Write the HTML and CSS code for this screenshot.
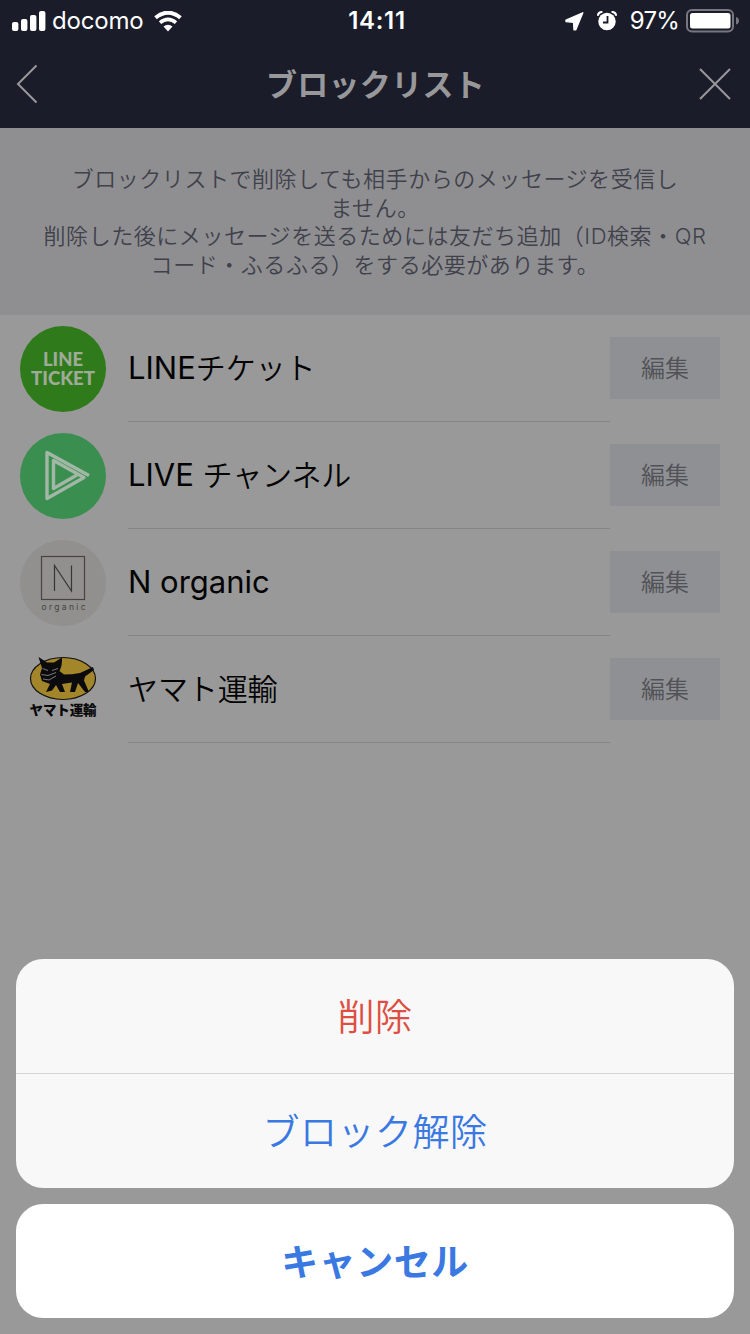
FILE: index.html
```html
<!DOCTYPE html>
<html lang="ja">
<head>
<meta charset="utf-8">
<title>ブロックリスト</title>
<link rel="stylesheet" href="styles.css">
</head>
<body>
<div class="screen">
  <header class="header">
    <div class="status">
      <div class="status-left">
        <svg class="signal" width="34" height="21" viewBox="0 0 34 21" fill="#fff"><rect x="0" y="11" width="6.400" height="9" rx="2"/><rect x="9" y="8" width="6.400" height="12" rx="2"/><rect x="18" y="4" width="6.400" height="16" rx="2"/><rect x="27" y="0" width="6.400" height="20" rx="2"/></svg>
        <span class="carrier">docomo</span>
        <svg class="wifi" width="28" height="21" viewBox="0 0 28 21" fill="none" stroke="#fff"><path d="M1.500 6.700Q14 -3.300 26.500 6.700" stroke-width="4"/><path d="M6 11.600Q14 5 22 11.600" stroke-width="3.600"/><path d="M9.500 15.500Q14 12 18.500 15.500L14 20.500Z" fill="#fff" stroke="none"/></svg>
      </div>
      <span class="clock">14:11</span>
      <div class="status-right">
        <svg class="loc" width="19" height="19" viewBox="0 0 19 19"><path d="M17.800.8 10.800 17.800 9 17.800 8.600 10.200 1 9.600 1 8.200Z" fill="#fff" stroke="#fff" stroke-width="1.400" stroke-linejoin="round"/></svg>
        <svg class="alarm" width="20" height="20" viewBox="0 0 20 20"><circle cx="10" cy="10.500" r="8.700" fill="#fff"/><path d="M1 4Q1.500 1.200 4.600.9M19 4Q18.500 1.200 15.400.9" stroke="#fff" stroke-width="2" fill="none" stroke-linecap="round"/><path d="M10.500 5v6.500H6" stroke="#1a1c29" stroke-width="1.800" fill="none"/></svg>
        <span class="percent">97%</span>
        <svg class="battery" width="54" height="24" viewBox="0 0 54 24"><rect x="1" y="1" width="46" height="21.500" rx="5" fill="none" stroke="#76777f" stroke-width="2"/><rect x="4" y="4" width="40.500" height="15.500" rx="2.500" fill="#fff"/><path d="M50 8q3 .8 3 3.800t-3 3.800z" fill="#76777f"/></svg>
      </div>
    </div>
    <nav class="nav">
      <svg width="22" height="40" viewBox="0 0 22 40"><path d="M20.500 1.500 2 20 20.500 38.500" fill="none" stroke="#98989b" stroke-width="2"/></svg>
      <h1 class="title">ブロックリスト</h1>
      <svg width="32" height="32" viewBox="0 0 32 32"><path d="M1 1 31 31M31 1 1 31" stroke="#98989b" stroke-width="2"/></svg>
    </nav>
  </header>

  <p class="notice">ブロックリストで削除しても相手からのメッセージを受信し<br>ません。<br>削除した後にメッセージを送るためには友だち追加（ID検索・QR<br>コード・ふるふる）をする必要があります。</p>

  <ul class="list">
    <li class="row">
      <svg class="avatar" viewBox="0 0 86 86"><circle cx="43" cy="43" r="43" fill="#2f7a1b"/><g fill="#a0aa9a" font-family="Lato, sans-serif" font-weight="900" font-size="18"><text x="23" y="39.500" textLength="40" lengthAdjust="spacingAndGlyphs">LINE</text><text x="11" y="59" textLength="64" lengthAdjust="spacingAndGlyphs">TICKET</text></g></svg>
      <span class="name">LINE<span class="kana">チケット</span></span>
      <button class="edit">編集</button>
    </li>
    <li class="row">
      <svg class="avatar" viewBox="0 0 86 86"><circle cx="43" cy="43" r="43" fill="#3a8f50"/><path d="M69 42.500 27 19.500V65.500L64 44.500 33.500 27.500V55.500L57 42" fill="none" stroke="#a2b7a5" stroke-width="3.400" stroke-linejoin="round"/></svg>
      <span class="name">LIVE <span class="kana">チャンネル</span></span>
      <button class="edit">編集</button>
    </li>
    <li class="row">
      <svg class="avatar" viewBox="0 0 86 86"><circle cx="43" cy="43" r="43" fill="#92908e"/><rect x="21.500" y="16.500" width="43" height="43" fill="none" stroke="#464443" stroke-width="1.200"/><path d="M34.500 51V25.500L51.500 51V25.500" fill="none" stroke="#383635" stroke-width="1.200"/><text x="21.500" y="70" fill="#444" font-family="Inter, sans-serif" font-size="8.500" textLength="44">organic</text></svg>
      <span class="name">N organic</span>
      <button class="edit">編集</button>
    </li>
    <li class="row">
      <svg class="avatar" viewBox="0 0 86 86"><ellipse cx="43" cy="31.500" rx="32.500" ry="21" fill="#a38629" stroke="#111" stroke-width="1.200"/><path d="M18.500 10 27 15.500H34L42 10.500Q42.500 18 39.500 24L44 27.500Q52 27.500 60 26L73 20 74 23 65 29.500 64 33.500 69 45H65L58 36 55 45H50L52 35.500 42 37 45 45H40L36 38 32 43.500 26 45 30 37 22 34 20 27.500 22 21Z" fill="#0b0b0d"/><path d="M22.500 21.500 28 23.500M38 21.500 32 23.500M21.500 27.500 28 28.500 36 25.500M23 32 29 33 36 29" stroke="#858585" stroke-width=".9" fill="none"/><text x="9.500" y="67.500" fill="#090909" font-family="Noto Sans CJK JP, sans-serif" font-weight="900" font-size="13.500" textLength="67">ヤマト運輸</text></svg>
      <span class="name"><span class="kana">ヤマト運輸</span></span>
      <button class="edit">編集</button>
    </li>
  </ul>

  <div class="sheet">
    <div class="sheet-group">
      <button class="action danger">削除</button>
      <button class="action">ブロック解除</button>
    </div>
    <button class="action cancel">キャンセル</button>
  </div>
</div>
</body>
</html>
```
FILE: styles.css
```css
* { box-sizing: border-box; }

body {
  margin: 0;
  font-family: Inter, "Noto Sans CJK JP", sans-serif;
}

button {
  border: 0;
  padding: 0;
  font: inherit;
}

.screen {
  position: relative;
  width: 750px;
  height: 1334px;
  overflow: hidden;
  background: #999;
}

.header {
  height: 128px;
  background: #1a1c29;
  color: #fff;
}

.status {
  display: grid;
  grid-template-columns: 1fr auto 1fr;
  align-items: center;
  height: 40px;
  padding: 1px 10px 0 12px;
  font-size: 24px;
  line-height: 40px;
}

.status-left,
.status-right {
  display: flex;
  align-items: center;
}

.status-right { justify-content: flex-end; }

.carrier {
  margin: 0 11px 0 6px;
  letter-spacing: -0.2px;
}

.clock {
  padding-left: 2px;
  font-weight: 600;
  letter-spacing: 0.7px;
}

.alarm { margin: 0 13px 0 13px; }

.percent {
  margin-right: 7px;
  letter-spacing: -0.8px;
}

.nav {
  display: grid;
  grid-template-columns: 32px 1fr 32px;
  align-items: center;
  height: 88px;
  padding: 0 19px 0 16px;
}

.title {
  margin: 0;
  padding: 2px 0 0 4px;
  color: #98989b;
  font-size: 31px;
  font-weight: 700;
  line-height: 40px;
  letter-spacing: 0.3px;
  text-align: center;
}

.notice {
  height: 187px;
  margin: 0;
  padding-top: 37px;
  background: #8f8f92;
  color: #40414b;
  font-size: 22px;
  font-weight: 350;
  line-height: 28.5px;
  letter-spacing: 0.55px;
  text-align: center;
  white-space: nowrap;
}

.list {
  margin: 0;
  padding: 0;
  list-style: none;
}

.row {
  display: grid;
  grid-template-columns: 108px 482px 110px;
  align-items: center;
  height: 107px;
  padding-left: 20px;
}

.avatar {
  width: 86px;
  height: 86px;
}

.name {
  height: 107px;
  border-bottom: 1px solid #858585;
  color: #030303;
  font-size: 31px;
  font-weight: 400;
  line-height: 105px;
}

.kana {
  font-size: 30px;
  font-weight: 350;
  letter-spacing: -0.1px;
}

.edit {
  height: 62px;
  margin-bottom: 2px;
  padding-bottom: 2px;
  background: #8f9093;
  color: #515257;
  font-size: 24px;
  font-weight: 350;
}

.sheet {
  position: absolute;
  right: 16px;
  bottom: 16px;
  left: 16px;
  display: flex;
  flex-direction: column;
  gap: 16px;
}

.sheet-group {
  display: flex;
  flex-direction: column;
  overflow: hidden;
  border-radius: 27px;
  background: #f8f8f8;
}

.action {
  height: 114px;
  padding-bottom: 3px;
  background: transparent;
  color: #3a78e2;
  font-size: 37px;
  font-weight: 350;
  letter-spacing: 0.5px;
}

.danger {
  height: 115px;
  border-bottom: 1px solid #d4d4d6;
  color: #dc4f42;
}

.cancel {
  border-radius: 27px;
  background: #fff;
  font-weight: 700;
}
```
